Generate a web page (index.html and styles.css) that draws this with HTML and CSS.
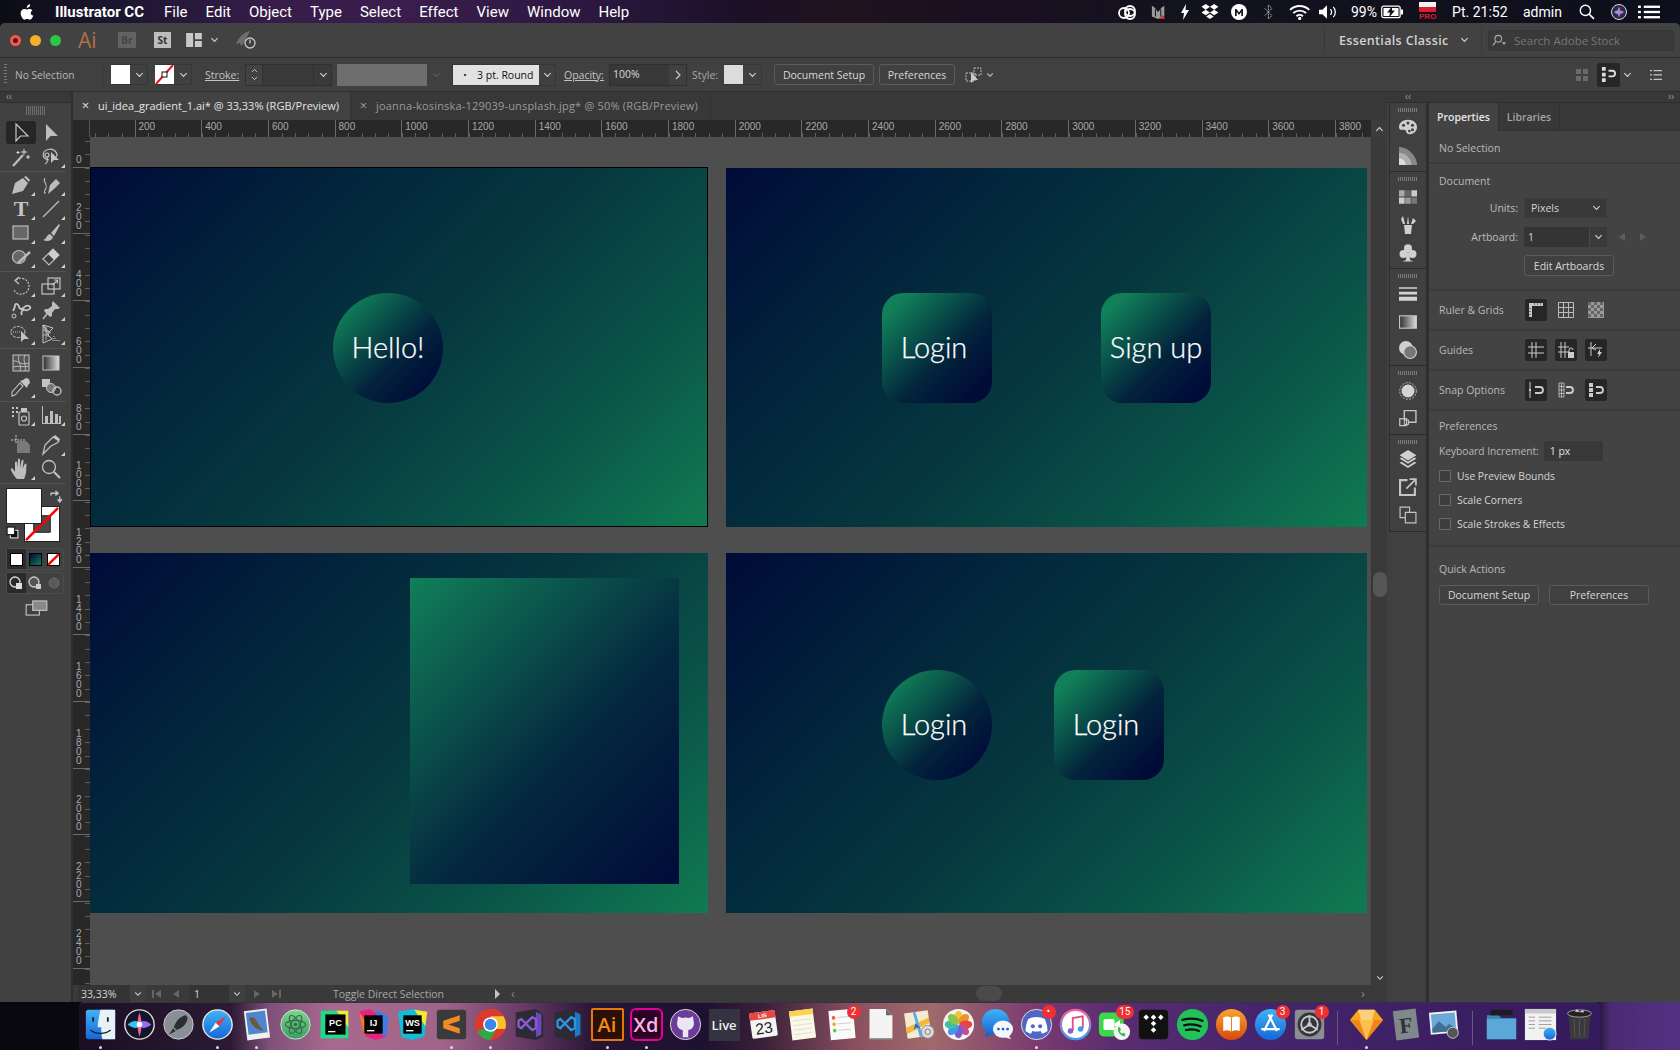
FILE: index.html
```html
<!DOCTYPE html>
<html lang="en">
<head>
<meta charset="utf-8">
<title>Illustrator CC</title>
<link rel="stylesheet" href="styles.css">
</head>
<body>
<svg class="defs" aria-hidden="true">
  <defs>
    <symbol id="chev" viewBox="0 0 10 6"><path d="M1.5 1 5 4.6 8.5 1" fill="none" stroke="currentColor" stroke-width="1.3"/></symbol>
    <linearGradient id="gGrey" x1="0" x2="1" y1="0" y2="0"><stop offset="0" stop-color="#2e2e2e"/><stop offset="1" stop-color="#ddd"/></linearGradient>
    <linearGradient id="gBlue" x1="0" x2="0" y1="0" y2="1"><stop offset="0" stop-color="#3fb4f5"/><stop offset="1" stop-color="#1666d8"/></linearGradient>
    <linearGradient id="gGreen" x1="0" x2="0" y1="0" y2="1"><stop offset="0" stop-color="#7fd28f"/><stop offset="1" stop-color="#3c9e62"/></linearGradient>
    <linearGradient id="gOrange" x1="0" x2="0" y1="0" y2="1"><stop offset="0" stop-color="#f7a52c"/><stop offset="1" stop-color="#d9480f"/></linearGradient>
    <linearGradient id="gFace" x1="0" x2="0" y1="0" y2="1"><stop offset="0" stop-color="#f45fa0"/><stop offset="1" stop-color="#3c9df0"/></linearGradient>
  </defs>
</svg>

<header class="menubar">
  <svg class="apple" viewBox="0 0 16 18"><path d="M11.6 0c.1 1.3-.4 2.3-1.1 3.1-.7.8-1.7 1.3-2.7 1.2-.1-1.2.5-2.3 1.1-3C9.6.6 10.7.1 11.6 0zM15.3 13c-.4 1-.6 1.4-1.1 2.3-.7 1.1-1.7 2.5-3 2.5-1.1 0-1.4-.7-2.9-.7s-1.9.7-3 .7c-1.3 0-2.2-1.3-2.9-2.3C.5 12.6.3 9.3 1.5 7.5c.9-1.3 2.2-2 3.4-2 1.3 0 2.1.7 3.1.7s1.7-.7 3.1-.7c1.1 0 2.3.6 3.1 1.7-2.7 1.5-2.3 5.3.6 5.8z"/></svg>
  <nav class="menus">
    <b>Illustrator CC</b><span>File</span><span>Edit</span><span>Object</span><span>Type</span><span>Select</span><span>Effect</span><span>View</span><span>Window</span><span>Help</span>
  </nav>
  <div class="extras">
    <svg viewBox="0 0 20 16" class="mi"><g fill="none" stroke="#fff" stroke-width="1.8"><circle cx="7" cy="9" r="5"/><circle cx="13" cy="7" r="5"/><circle cx="13" cy="10" r="5"/></g></svg>
    <svg viewBox="0 0 16 18" class="mi"><path d="M1 2l3 2 4 5 4-5 3-2v12l-7 3-7-3z" fill="#9a9a9a"/><path d="M5 6v8M11 6v8" stroke="#1c1c2a" stroke-width="1.2"/><path d="M10 17l3-5 3 5z" fill="#e5252a"/></svg>
    <svg viewBox="0 0 8 16" class="mi"><path d="M5 0 0 9h3l-1 7 6-10H4.6z" fill="#fff"/></svg>
    <svg viewBox="0 0 19 17" class="mi"><path d="M5 0l4.5 3L5 6 .5 3zM14 0l4.5 3L14 6 9.5 3zM5 6l4.5 3L5 12 .5 9zM14 6l4.5 3L14 12 9.5 9zM9.5 10.500l4 2.700-4 2.800-4-2.800z" fill="#fff"/></svg>
    <svg viewBox="0 0 16 16" class="mi"><circle cx="8" cy="8" r="8" fill="#fff"/><path d="M4 12V5h1.5L8 8.500 10.500 5H12v7h-1.700V8L8 11 5.700 8v4z" fill="#15151f"/></svg>
    <svg viewBox="0 0 12 18" class="mi"><path d="M2 5l8 8-4 4V1l4 4-8 8" fill="none" stroke="#bbb" stroke-width="1.1" stroke-dasharray="2 1"/></svg>
    <svg viewBox="0 0 20 15" class="mi"><g fill="none" stroke="#fff" stroke-width="1.8"><path d="M1 5.500a13 13 0 0 1 18 0"/><path d="M4 8.500a9 9 0 0 1 12 0"/><path d="M7 11.500a4.500 4.500 0 0 1 6 0"/></g><circle cx="10" cy="13.500" r="1.500" fill="#fff"/></svg>
    <svg viewBox="0 0 17 14" class="mi"><path d="M0 5h3l4-4v12l-4-4H0z" fill="#fff"/><path d="M10 4.500a3.500 3.500 0 0 1 0 5M12.500 2.500a6.500 6.500 0 0 1 0 9" fill="none" stroke="#fff" stroke-width="1.1"/></svg>
    <span class="mtxt">99%</span>
    <svg viewBox="0 0 22 13" class="mi"><rect x=".7" y=".7" width="18.500" height="11.500" rx="2" fill="none" stroke="#fff" stroke-width="1.2"/><rect x="20" y="4" width="2" height="5" fill="#fff"/><rect x="2.500" y="2.500" width="15" height="8" fill="#fff"/><path d="M11 1 6 7h3l-1 5 6-7h-3z" fill="#15151f"/></svg>
    <div class="flag"><i></i><i></i><em>PRO</em></div>
    <span class="mtxt">Pt. 21:52</span>
    <span class="mtxt">admin</span>
    <svg viewBox="0 0 15 15" class="mi"><circle cx="6" cy="6" r="4.800" fill="none" stroke="#fff" stroke-width="1.3"/><path d="M9.500 9.500 14 14" stroke="#fff" stroke-width="1.5"/></svg>
    <svg viewBox="0 0 16 16" class="mi"><circle cx="8" cy="8" r="7.500" fill="#2a2a48" stroke="#ddd"/><path d="M8 2.500C10 6 10 10 8 13.500 6 10 6 6 8 2.500z" fill="#f45fa0"/><path d="M3 8c3-2 5-2 5 0s-2 3-5 0z" fill="#4ec0f0"/><path d="M13 8c-3-2-5-2-5 0s2 3 5 0z" fill="#a77cf0"/></svg>
    <svg viewBox="0 0 19 13" class="mi"><g fill="#fff"><rect x="0" y="1" width="2.500" height="2"/><rect x="0" y="5.500" width="2.500" height="2"/><rect x="0" y="10" width="2.500" height="2"/><rect x="5" y="1" width="14" height="2"/><rect x="5" y="5.500" width="14" height="2"/><rect x="5" y="10" width="14" height="2"/></g></svg>
  </div>
</header>

<div class="window">
  <div class="appbar">
    <div class="lights"><i class="red"></i><i class="yel"></i><i class="grn"></i></div>
    <span class="ailogo">Ai</span>
    <span class="tile br">Br</span>
    <span class="tile st">St</span>
    <svg viewBox="0 0 18 16" class="wsicon"><path d="M0 0h8v16H0zM10 0h8v7h-8zM10 9h8v7h-8z" fill="#c8c8c8"/></svg>
    <svg class="chev ws-ch"><use href="#chev"/></svg>
    <svg viewBox="0 0 22 18" class="rocket"><path d="M15 0C9 1 4 6 1 13l4-1 1 3c2-2 4-5 9-15z" fill="#6e6e6e"/><circle cx="15" cy="12" r="5" fill="#3f3f3f" stroke="#c8c8c8" stroke-width="1.3"/><path d="M15 8.500v4" stroke="#c8c8c8" stroke-width="1.3"/></svg>
    <div class="spacer"></div>
    <div class="workspace">Essentials Classic <svg class="chev"><use href="#chev"/></svg></div>
    <div class="stock">
      <svg viewBox="0 0 18 14" class="sicon"><circle cx="7" cy="5" r="3.800" fill="none" stroke="#aaa" stroke-width="1.2"/><path d="M4.500 8 1 12.500" stroke="#aaa" stroke-width="1.4"/><path d="M11 9h5l-2.500 3z" fill="#aaa"/></svg>
      <span>Search Adobe Stock</span>
    </div>
  </div>

  <div class="ctrl">
    <i class="grip-v"></i>
    <span class="nosel">No Selection</span>
    <div class="swatchdd"><i class="sw white"></i><svg class="chev"><use href="#chev"/></svg></div>
    <div class="swatchdd"><svg viewBox="0 0 19 19" class="sw"><rect width="19" height="19" fill="#fff"/><path d="M1 19 18 0" stroke="#e3131b" stroke-width="2"/><rect x="7" y="7" width="5" height="5" fill="#fff" stroke="#111"/></svg><svg class="chev"><use href="#chev"/></svg></div>
    <span class="ul stroke-l">Stroke:</span>
    <div class="strokebox"><span class="spin"><svg class="chev up"><use href="#chev"/></svg><svg class="chev"><use href="#chev"/></svg></span><span class="blank"></span><svg class="chev"><use href="#chev"/></svg></div>
    <div class="greybox"><span></span><svg class="chev"><use href="#chev"/></svg></div>
    <div class="brushbox"><span><i>•</i>3 pt. Round</span><svg class="chev"><use href="#chev"/></svg></div>
    <span class="ul opac-l">Opacity:</span>
    <div class="opacbox"><span>100%</span><svg viewBox="0 0 6 10" class="caret"><path d="M1 1l4 4-4 4" fill="none" stroke="#ccc" stroke-width="1.2"/></svg></div>
    <span class="style-l">Style:</span>
    <div class="swatchdd style-d"><i class="sw lgrey"></i><svg class="chev"><use href="#chev"/></svg></div>
    <button class="btn b-doc">Document Setup</button>
    <button class="btn b-pref">Preferences</button>
    <svg viewBox="0 0 17 18" class="isol"><path d="M1 7h9v8H1z M9 2h7v7H9z" fill="none" stroke="#bbb" stroke-dasharray="2 1"/><path d="M6 6v11l3-3h4z" fill="#ccc"/></svg>
    <svg class="chev iso-ch"><use href="#chev"/></svg>
    <div class="spacer"></div>
    <svg viewBox="0 0 12 12" class="grid4"><path d="M0 0h5v5H0zM7 0h5v5H7zM0 7h5v5H0zM7 7h5v5H7z" fill="#6a6a6a"/></svg>
    <div class="darkbox"><svg viewBox="0 0 16 18"><path d="M1 1h4v4H1zM1 7h4v4H1zM1 13h4v4H1z" fill="#ddd"/><path d="M8 5h4a3 3 0 0 1 0 6H8" fill="none" stroke="#ddd" stroke-width="2"/></svg></div>
    <svg class="chev"><use href="#chev"/></svg>
    <svg viewBox="0 0 12 12" class="listic"><path d="M0 1h2v1.300H0zM0 5.300h2v1.300H0zM0 9.700h2V11H0zM3.500 1H12v1.300H3.500zM3.500 5.300H12v1.300H3.500zM3.500 9.700H12V11H3.500z" fill="#c4c4c4"/></svg>
  </div>

  <div class="work">
    <aside class="toolbar">
      <div class="collapse"><span>‹‹</span></div>
      <div class="grip"></div>
      <div class="tools t-first">
        <span class="tool on"><svg viewBox="0 0 22 22" class="ic"><path d="M6 2v17l4.500-5H18z"/></svg></span>
        <span class="tool"><svg viewBox="0 0 22 22" class="fi"><path d="M6 2v17l4.500-5H18z"/></svg></span>
        <span class="tool"><svg viewBox="0 0 22 22"><path d="M3 20 13 9" stroke="#bdbdbd" stroke-width="2.2"/><path d="M14 3v6M11 6h6M18 9v4M16 11h4M8 5v3M6.500 6.500h3" stroke="#ddd"/></svg></span>
        <span class="tool more"><svg viewBox="0 0 22 22" class="ic"><path d="M9 14C3 13 2 9 4 6s8-4 11-1 2 5 1 6"/><circle cx="7" cy="9" r="2"/><path d="M7 11c1 4 0 6-2 7"/><path d="M11 6v11l3-3h5z" class="fi2"/></svg></span>
      </div>
      <div class="tools t-tight">
        <span class="tool more"><svg viewBox="0 0 22 22" class="fi"><path d="M2 20 5 9 13 4l5 5-5 8zM2 20l6-6" /><path d="M14 3l2-1 4 4-1 2z"/></svg></span>
        <span class="tool more"><svg viewBox="0 0 22 22"><path d="M8 20 10 11l6-6 4 4-6 6z" fill="#bdbdbd"/><path d="M5 4C2 8 8 9 6 14s-3 5 0 5" fill="none" stroke="#bdbdbd" stroke-width="1.1"/></svg></span>
        <span class="tool more"><b class="ttool">T</b></span>
        <span class="tool more"><svg viewBox="0 0 22 22"><path d="M3 19 19 3" stroke="#bdbdbd" stroke-width="1.2"/></svg></span>
        <span class="tool more"><svg viewBox="0 0 22 22"><rect x="3" y="4" width="15" height="13" fill="#666" stroke="#bdbdbd" stroke-width="1.2"/></svg></span>
        <span class="tool more"><svg viewBox="0 0 22 22" class="fi"><path d="M19 2 11 11l3 3 6-11zM10 12c-4 1-3 5-7 6 4 2 9 1 10-3z"/></svg></span>
        <span class="tool more"><svg viewBox="0 0 22 22"><circle cx="9" cy="11" r="6.500" fill="#666" stroke="#bdbdbd" stroke-width="1.2"/><path d="M8 17 20 6" stroke="#bdbdbd" stroke-width="2.4"/></svg></span>
        <span class="tool more"><svg viewBox="0 0 22 22"><path d="M3 13 13 3l6 6-10 10z" fill="#3f3f3f" stroke="#bdbdbd" stroke-width="1.2"/><path d="M8 8 13 3l6 6-5 5z" fill="#cfcfcf"/></svg></span>
      </div>
      <div class="tools">
        <span class="tool more"><svg viewBox="0 0 22 22" class="ic"><path d="M6 5A8 8 0 1 1 4 15" stroke-dasharray="2 1.3"/><path d="M9 2 5 5.500 9 9"/></svg></span>
        <span class="tool more"><svg viewBox="0 0 22 22" class="ic"><rect x="8" y="3" width="12" height="11"/><rect x="2" y="9" width="12" height="10"/><path d="M12 10l5-4M14 5h3.500v3.500"/></svg></span>
        <span class="tool more"><svg viewBox="0 0 22 22"><path d="M3 12c3-4 1-8 4-7s1 5 4 5 4-5 8-3-2 5-4 4-5 2-3 5" fill="none" stroke="#c8c8c8" stroke-width="1.8"/><circle cx="4" cy="17" r="2" fill="none" stroke="#c8c8c8"/></svg></span>
        <span class="tool more"><svg viewBox="0 0 22 22" class="fi"><path d="M13 2 20 9l-2 1-3 0-3 4 0 3-2 1L4 12l1-2 3 0 4-3 0-3z"/><path d="M3 20 8 13.500" stroke="#bdbdbd" stroke-width="1.5"/></svg></span>
        <span class="tool more"><svg viewBox="0 0 22 22"><ellipse cx="8" cy="9" rx="7" ry="5.500" fill="none" stroke="#c4c4c4" stroke-dasharray="3 1"/><path d="M3 9h9" stroke="#c4c4c4" stroke-dasharray="1 1"/><path d="M11 8v11l3-3h5z" fill="#c4c4c4"/></svg></span>
        <span class="tool more"><svg viewBox="0 0 22 22"><path d="M3 2v18l9-4-4-4z M3 2l6 7 4-4z" fill="none" stroke="#c4c4c4"/><path d="M3 7l8 3M3 12h5M6 4v13M9 9l-1 5" stroke="#c4c4c4" stroke-width=".8"/><path d="M12 15h4v1h-4zM13 13h2v1h-2zM12 17h8v1h-8z" fill="#888"/></svg></span>
      </div>
      <div class="tools">
        <span class="tool"><svg viewBox="0 0 22 22"><rect x="3" y="3" width="16" height="16" fill="#555" stroke="#c4c4c4"/><path d="M3 9c6-1 6 5 16 2M9 3c-2 8 3 8 1 16M15 3c-3 6 2 10 0 16M3 15c6-2 10 1 16-1" fill="none" stroke="#c4c4c4" stroke-width=".9"/></svg></span>
        <span class="tool"><svg viewBox="0 0 22 22"><rect x="3" y="4" width="16" height="14" fill="url(#gGrey)" stroke="#c4c4c4"/></svg></span>
        <span class="tool more"><svg viewBox="0 0 22 22"><path d="M2 20l3-1 8-9-3-3-8 9z" fill="none" stroke="#c4c4c4" stroke-width="1.1"/><path d="M10 5l7 7 1-3 2-2-1-4-3-1-3 2z" fill="#c4c4c4"/></svg></span>
        <span class="tool"><svg viewBox="0 0 22 22"><rect x="2" y="3" width="8" height="8" fill="#c4c4c4"/><circle cx="11" cy="12" r="4.500" fill="#777" stroke="#c4c4c4"/><circle cx="17" cy="15" r="4" fill="none" stroke="#c4c4c4" stroke-width="1.3"/></svg></span>
      </div>
      <div class="tools nosep">
        <span class="tool more"><svg viewBox="0 0 22 22"><path d="M2 3h2v2H2zM6 3h2v2H6zM2 7h2v2H2zM6 7h2v2H6zM2 11h2v2H2z" fill="#c4c4c4"/><rect x="9" y="8" width="10" height="13" rx="1" fill="#3f3f3f" stroke="#c4c4c4" stroke-width="1.2"/><rect x="11" y="4" width="6" height="4" fill="#c4c4c4"/><circle cx="14" cy="14.500" r="2.500" fill="none" stroke="#c4c4c4" stroke-width="1.2"/></svg></span>
        <span class="tool more"><svg viewBox="0 0 22 22" class="fi"><path d="M2 2h1v17h18v1H2zM5 12h3v7H5zM10 7h3v12h-3zM15 10h3v9h-3zM19 12h2v7h-2z"/></svg></span>
      </div>
      <div class="tools t-last">
        <span class="tool"><svg viewBox="0 0 22 22"><path d="M6 1v9M1 6h14" stroke="#c4c4c4" stroke-dasharray="2 1"/><path d="M7 7h9l4 4v8H7z" fill="#7a7a7a"/></svg></span>
        <span class="tool more"><svg viewBox="0 0 22 22"><path d="M3 20l2-9 8-8 6 4-2 2-6 3z" fill="none" stroke="#c4c4c4" stroke-width="1.2"/><path d="M13 3l6 4 1-2-5-4z" fill="#c4c4c4"/></svg></span>
        <span class="tool more"><svg viewBox="0 0 22 22" class="fi"><path d="M7 21c-2-2-5-6-6-9-.5-2 1-2 2-1l2 3 0-9c0-2 2-2 2 0v5l1-8c0-2 2-2 2 0v8l1.500-7c.5-2 2.500-1.500 2 .5l-1 7 2-4c1-2 2.500-1 2 .5L16 15c-1 3-1 4-2 6z"/></svg></span>
        <span class="tool"><svg viewBox="0 0 22 22"><circle cx="9" cy="9" r="6.500" fill="none" stroke="#c4c4c4" stroke-width="1.3"/><path d="M14 14l6 6" stroke="#c4c4c4" stroke-width="2"/></svg></span>
      </div>
      <div class="colors">
        <div class="fillstroke">
          <i class="bigfill"></i>
          <svg viewBox="0 0 35 35" class="bigstroke"><path d="M0 0h35v35H0z M9 9v17h17V9z" fill="#fff" fill-rule="evenodd"/><path d="M9 9h17v17H9z" fill="#4a4a4a" stroke="#222"/><path d="M1 34 34 1" stroke="#f00" stroke-width="2.6"/></svg>
          <svg viewBox="0 0 12 12" class="swap"><path d="M1 5V3h6M5 1l2.500 2L5 5M9 6v4M7 8.500l2 2.500 2-2.500" fill="none" stroke="#c4c4c4" stroke-width="1.3"/></svg>
          <svg viewBox="0 0 12 12" class="deflt"><rect x="4" y="4" width="7" height="7" fill="#111" stroke="#ddd"/><rect x="1" y="1" width="7" height="7" fill="#fff" stroke="#111"/></svg>
        </div>
        <div class="seg">
          <span class="on"><i class="cm white"></i></span>
          <span><i class="cm grad"></i></span>
          <span><svg viewBox="0 0 12 12" class="cm"><rect width="12" height="12" fill="#fff"/><path d="M0 12 12 0" stroke="#f00" stroke-width="2.6"/></svg></span>
        </div>
        <div class="seg">
          <span class="on"><svg viewBox="0 0 14 14" class="dm"><circle cx="6" cy="6" r="5" fill="none" stroke="#ddd" stroke-width="1.3"/><rect x="7" y="7" width="6" height="6" fill="#ddd"/></svg></span>
          <span><svg viewBox="0 0 14 14" class="dm"><circle cx="6" cy="6" r="5" fill="#555" stroke="#ccc" stroke-width="1.3"/><rect x="8" y="8" width="5" height="5" fill="#ccc"/></svg></span>
          <span><svg viewBox="0 0 14 14" class="dm"><circle cx="7" cy="7" r="5" fill="#5a5a5a" stroke="#6a6a6a"/></svg></span>
        </div>
        <svg viewBox="0 0 24 17" class="screen"><rect x="1" y="5" width="14" height="11" fill="#3f3f3f" stroke="#c4c4c4" stroke-width="1.2"/><rect x="8" y="1" width="15" height="10" fill="#888" stroke="#c4c4c4" stroke-width="1.2"/></svg>
      </div>
    </aside>

    <main class="doc">
      <div class="tabs">
        <div class="tab active"><span class="x">×</span>ui_idea_gradient_1.ai* @ 33,33% (RGB/Preview)</div>
        <div class="tab"><span class="x">×</span>joanna-kosinska-129039-unsplash.jpg* @ 50% (RGB/Preview)</div>
      </div>
      <div class="hruler">
        <i class="corner"></i>
        <div class="hticks">
          <span class="lead"></span>
          <span>200</span><span>400</span><span>600</span><span>800</span><span>1000</span><span>1200</span><span>1400</span><span>1600</span><span>1800</span><span>2000</span><span>2200</span><span>2400</span><span>2600</span><span>2800</span><span>3000</span><span>3200</span><span>3400</span><span>3600</span><span>3800</span>
        </div>
        <i class="vs-up"><svg class="chev flip"><use href="#chev"/></svg></i>
      </div>
      <div class="mid">
        <div class="vruler">
          <span class="first">0</span>
          <span>200</span><span>400</span><span>600</span><span>800</span><span>1000</span><span>1200</span><span>1400</span><span>1600</span><span>1800</span><span>2000</span><span>2200</span><span>2400</span>
        </div>
        <div class="canvas">
          <section class="ab ab1 selected">
            <div class="pill circle c1">Hello!</div>
          </section>
          <section class="ab ab2">
            <div class="pill round r1"><span class="nudge">Login</span></div>
            <div class="pill round r2">Sign up</div>
          </section>
          <section class="ab ab3">
            <div class="bigsq"></div>
          </section>
          <section class="ab ab4">
            <div class="pill circle c4"><span class="nudge">Login</span></div>
            <div class="pill round r4"><span class="nudge">Login</span></div>
          </section>
        </div>
        <div class="vscroll"><i class="vthumb"></i><svg class="chev vs-down"><use href="#chev"/></svg></div>
      </div>
      <div class="statusbar">
        <div class="fld zoomf"><span>33,33%</span></div><span class="ddbox"><svg class="chev"><use href="#chev"/></svg></span>
        <div class="navs"><i class="first-i"></i><i class="prev-i"></i></div>
        <div class="fld pagef"><span>1</span></div><span class="ddbox"><svg class="chev"><use href="#chev"/></svg></span>
        <div class="navs"><i class="next-i"></i><i class="last-i"></i></div>
        <span class="toggle">Toggle Direct Selection</span>
        <i class="playbox"></i>
        <span class="lt">‹</span>
        <div class="htrack"><i class="hthumb"></i></div>
        <span class="rt">›</span>
      </div>
    </main>

    <div class="iconcol">
      <div class="collapse col-top"><span>‹‹</span></div>
      <div class="dockgroup g1">
        <i class="gripdots"></i>
        <svg viewBox="0 0 20 16" class="pi"><path d="M10 0C4 0 0 4 0 8c0 4 3 3 5 3 2 0 3 1 3 2s1 3 4 3c5 0 8-4 8-8s-4-8-10-8z" fill="#cfcfcf"/><g fill="#3f3f3f"><circle cx="10" cy="3.500" r="1.700"/><circle cx="15" cy="6" r="1.700"/><circle cx="5" cy="6" r="1.700"/><circle cx="15" cy="11" r="1.700"/><circle cx="11.500" cy="12.500" r="1.500"/></g></svg>
        <svg viewBox="0 0 16 16" class="pi"><path d="M0 0c8 0 16 8 16 16H0z" fill="#888"/><path d="M0 5c6 0 11 5 11 11H0z" fill="#b0b0b0"/><path d="M0 10c3 0 6 3 6 6H0z" fill="#ddd"/></svg>
      </div>
      <div class="dockgroup g2">
        <i class="gripdots"></i>
        <svg viewBox="0 0 16 12" class="pi"><path d="M0 0h5v5.500H0z" fill="#aaa"/><path d="M5.500 0h5v5.500h-5z" fill="#666"/><path d="M11 0h5v5.500h-5zM0 6.500h5V12H0z" fill="#ccc"/><path d="M5.500 6.500h5V12h-5z" fill="#999"/><path d="M11 6.500h5V12h-5z" fill="#777"/></svg>
        <svg viewBox="0 0 16 18" class="pi"><path d="M4 9h8l-1 9H5z" fill="#cfcfcf"/><path d="M3 0l2 8H3L1 3zM8 0l1 8H7zM13 2l-2 6h2l3-3z" fill="#cfcfcf"/></svg>
        <svg viewBox="0 0 16 17" class="pi"><g fill="#cfcfcf"><circle cx="8" cy="4" r="3.800"/><circle cx="3.800" cy="9.500" r="3.800"/><circle cx="12.200" cy="9.500" r="3.800"/><path d="M7 8h2l1 7 3 1.500H3L6 15z"/></g></svg>
      </div>
      <div class="dockgroup g3">
        <i class="gripdots"></i>
        <svg viewBox="0 0 16 12" class="pi"><path d="M0 0h16v1.300H0zM0 4h16v2.500H0zM0 8.500h16V12H0z" fill="#d4d4d4"/></svg>
        <svg viewBox="0 0 16 12" class="pi"><rect x=".5" y=".5" width="15" height="11" fill="url(#gGrey)" stroke="#c4c4c4"/></svg>
        <svg viewBox="0 0 17 17" class="pi"><circle cx="6.500" cy="6.500" r="6.500" fill="#d0d0d0"/><circle cx="10.500" cy="10.500" r="6" fill="#777" stroke="#d0d0d0"/></svg>
      </div>
      <div class="dockgroup g4">
        <i class="gripdots"></i>
        <svg viewBox="0 0 18 18" class="pi"><circle cx="9" cy="9" r="6.500" fill="#d4d4d4"/><circle cx="9" cy="9" r="8.300" fill="none" stroke="#bbb" stroke-dasharray="2 1.3"/></svg>
        <svg viewBox="0 0 17 16" class="pi"><path d="M5 10V1h11v11H9" fill="none" stroke="#c4c4c4" stroke-width="1.3"/><rect x=".7" y="8.700" width="6.500" height="6.500" fill="none" stroke="#c4c4c4" stroke-width="1.2"/><rect x="5" y="10" width="4" height="4" fill="none" stroke="#c4c4c4"/></svg>
      </div>
      <div class="dockgroup g5">
        <i class="gripdots"></i>
        <svg viewBox="0 0 16 17" class="pi"><path d="M8 0l8 5-8 5-8-5z" fill="#d0d0d0"/><path d="M0 8l2-1 6 4 6-4 2 1-8 5z" fill="#d0d0d0"/><path d="M0 12l2-1 6 4 6-4 2 1-8 5z" fill="#d0d0d0"/></svg>
        <svg viewBox="0 0 17 17" class="pi"><path d="M8 2H1v14h14V9" fill="none" stroke="#c4c4c4" stroke-width="2"/><path d="M7 10l8-8M10 1h6v6" fill="none" stroke="#c4c4c4" stroke-width="1.6"/></svg>
        <svg viewBox="0 0 17 17" class="pi"><path d="M1 1h9v5H6v5H1zM6 6h10v10H6z" fill="none" stroke="#c4c4c4" stroke-width="1.1"/></svg>
      </div>
    </div>

    <aside class="panel">
      <div class="collapse right"><span>››</span></div>
      <div class="ptabs"><div class="ptab active">Properties</div><div class="ptab">Libraries</div></div>
      <section class="sec s-nosel"><span class="plabel">No Selection</span></section>
      <section class="sec s-doc">
        <div class="plabel title">Document</div>
        <div class="frow"><label>Units:</label><div class="fld unitsf"><span>Pixels</span><svg class="chev"><use href="#chev"/></svg></div></div>
        <div class="frow"><label>Artboard:</label><div class="fld abf"><span>1</span><span class="abdd"><svg class="chev"><use href="#chev"/></svg></span></div><i class="tri-l"></i><i class="tri-r"></i></div>
        <div class="frow"><label></label><button class="btn editab">Edit Artboards</button></div>
      </section>
      <section class="sec s-row"><span class="rowlabel">Ruler &amp; Grids</span>
        <div class="sq on"><svg viewBox="0 0 16 16"><path d="M1 1h14v3H4v11H1z" fill="#c8c8c8"/><path d="M6 2h1M9 2h1M12 2h1M2 6v1M2 9v1M2 12v1" stroke="#222"/></svg></div>
        <div class="sq"><svg viewBox="0 0 16 16"><path d="M.5.5h15v15H.5zM5.500.5v15M10.500.5v15M.5 5.500h15M.5 10.500h15" fill="none" stroke="#bbb"/></svg></div>
        <div class="sq"><svg viewBox="0 0 16 16"><rect width="16" height="16" fill="#9a9a9a"/><path d="M0 0h3v3H0zM6 0h3v3H6zM12 0h3v3h-3zM3 3h3v3H3zM9 3h3v3H9zM0 6h3v3H0zM6 6h3v3H6zM12 6h3v3h-3zM3 9h3v3H3zM9 9h3v3H9zM0 12h3v3H0zM6 12h3v3H6zM12 12h3v3h-3z" fill="#666"/></svg></div>
      </section>
      <section class="sec s-row"><span class="rowlabel">Guides</span>
        <div class="sq on"><svg viewBox="0 0 16 16"><path d="M4 0v16M8 0v16M0 5h16M0 11h16" stroke="#ccc" fill="none"/></svg></div>
        <div class="sq on"><svg viewBox="0 0 16 16"><path d="M3 0v16M7 0v16M0 5h11M0 10h11" stroke="#ccc" fill="none"/><rect x="10" y="10" width="6" height="6" fill="#ccc"/><path d="M11 10V8a2 2 0 0 1 4 0" stroke="#ccc" fill="none"/></svg></div>
        <div class="sq on"><svg viewBox="0 0 16 16"><path d="M3 0v14M0 6h14M8 2 4 6l4 2" stroke="#ccc" fill="none"/><path d="M12 7l-3 5h2l-1 4 4-6h-2z" fill="#ccc"/></svg></div>
      </section>
      <section class="sec s-row"><span class="rowlabel">Snap Options</span>
        <div class="sq on"><svg viewBox="0 0 16 16"><path d="M2 0v16" stroke="#ccc"/><rect x="1" y="7" width="2" height="2" fill="#ccc"/><path d="M7 5h5a3 3 0 0 1 0 6H7" fill="none" stroke="#ccc" stroke-width="1.8"/></svg></div>
        <div class="sq"><svg viewBox="0 0 16 16"><path d="M1 1h5v14H1zM1 4.500h5M1 8h5M1 11.500h5M3.500 1v14" fill="none" stroke="#bbb" stroke-width=".9"/><path d="M8 5h4a3 3 0 0 1 0 6H8" fill="none" stroke="#ccc" stroke-width="1.8"/></svg></div>
        <div class="sq on"><svg viewBox="0 0 16 16"><path d="M1 1h4v4H1zM1 6h4v4H1zM1 11h4v4H1z" fill="#ccc"/><path d="M8 5h4a3 3 0 0 1 0 6H8" fill="none" stroke="#ccc" stroke-width="1.8"/></svg></div>
      </section>
      <section class="sec s-pref">
        <div class="plabel title">Preferences</div>
        <div class="krow"><label>Keyboard Increment:</label><div class="fld kf"><span>1 px</span></div></div>
        <div class="chk"><i></i>Use Preview Bounds</div>
        <div class="chk"><i></i>Scale Corners</div>
        <div class="chk"><i></i>Scale Strokes &amp; Effects</div>
      </section>
      <section class="sec s-quick">
        <div class="plabel title">Quick Actions</div>
        <div class="qrow"><button class="btn qb">Document Setup</button><button class="btn qb">Preferences</button></div>
      </section>
    </aside>
  </div>
</div>

<footer class="dockrow">
  <div class="dock">
    <div class="app on"><svg viewBox="0 0 36 36"><rect x="2" y="2" width="32" height="32" rx="3" fill="url(#gBlue)"/><path d="M18 2h16v32H20c-1-4-1.500-9-1-13h-4c0-7 2-14 3-19z" fill="#e8f0f8"/><path d="M10 10v5M26 10v5" stroke="#123" stroke-width="2"/><path d="M7 24c6 5 16 5 22 0" fill="none" stroke="#123" stroke-width="1.5"/></svg></div>
    <div class="app"><svg viewBox="0 0 36 36"><circle cx="18" cy="18" r="16" fill="#15152a" stroke="#ddd" stroke-width="1.5"/><path d="M18 5c3 8 3 18 0 26-3-8-3-18 0-26z" fill="#f45fa0"/><path d="M5 18c6-5 13-5 13 0s-7 5-13 0z" fill="#39c2f0"/><path d="M31 18c-6-5-13-5-13 0s7 5 13 0z" fill="#9a6cf2"/><circle cx="18" cy="18" r="3" fill="#fff"/></svg></div>
    <div class="app"><svg viewBox="0 0 36 36"><circle cx="18" cy="18" r="16" fill="#8a8f96" stroke="#cfd2d6"/><path d="M26 8c-6 1-11 6-13 13l3 3c7-2 11-7 12-13z" fill="#2b2e33"/><path d="M12 22l-4 7 7-4z" fill="#2b2e33"/></svg></div>
    <div class="app on"><svg viewBox="0 0 36 36"><circle cx="18" cy="18" r="16" fill="url(#gBlue)" stroke="#e8e8e8" stroke-width="1.5"/><path d="M27 9 20 20l-4-4z" fill="#e33"/><path d="M9 27l7-11 4 4z" fill="#fff"/></svg></div>
    <div class="app on"><svg viewBox="0 0 36 36"><g transform="rotate(-7 18 18)"><rect x="6" y="2" width="25" height="32" fill="#f0f0f0"/><rect x="8" y="4" width="21" height="24" fill="#4f86cf"/><path d="M11 10c5-2 8 3 9 8l5 8-7-3c-3-3-7-8-7-13z" fill="#6d5a38"/></g></svg></div>
    <div class="app"><svg viewBox="0 0 36 36"><circle cx="18" cy="18" r="16" fill="url(#gGreen)" stroke="#cdeccf"/><g fill="none" stroke="#2f6f44" stroke-width="1.3"><ellipse cx="18" cy="18" rx="11" ry="4.500"/><ellipse cx="18" cy="18" rx="11" ry="4.500" transform="rotate(60 18 18)"/><ellipse cx="18" cy="18" rx="11" ry="4.500" transform="rotate(120 18 18)"/></g><circle cx="18" cy="18" r="2" fill="#2f6f44"/></svg></div>
    <div class="app"><svg viewBox="0 0 36 36"><path d="M3 3h30v30H3z" fill="#1edc87"/><path d="M20 3h13v18z" fill="#f7e53c"/><path d="M3 16l12 17H3z" fill="#21d789"/><rect x="8" y="7" width="22" height="22" fill="#000"/><text x="19" y="20" class="jb">PC</text><path d="M11 25h8v1.500h-8z" fill="#fff"/></svg></div>
    <div class="app"><svg viewBox="0 0 36 36"><path d="M2 4 14 1l8 6 12 2-2 22-12 4L8 30z" fill="#e8227c"/><path d="M20 2l14 7-2 22-8-3z" fill="#3a7df0"/><path d="M2 4l6 26 8-6z" fill="#f57b21"/><rect x="8" y="8" width="20" height="20" fill="#000"/><text x="18" y="20" class="jb">IJ</text><path d="M11 24h8v1.500h-8z" fill="#fff"/></svg></div>
    <div class="app"><svg viewBox="0 0 36 36"><path d="M2 4l16-3 16 3-3 27-13 4L6 32z" fill="#13bdd8"/><path d="M20 2l14 2-2 16z" fill="#f6e732"/><rect x="8" y="8" width="20" height="20" fill="#000"/><text x="18" y="20" class="jb">WS</text><path d="M11 24h8v1.500h-8z" fill="#fff"/></svg></div>
    <div class="app on"><svg viewBox="0 0 36 36"><rect x="2" y="2" width="32" height="32" rx="3" fill="#3a3a3d"/><path d="M27 8v6L9 20v-6zM9 16l18 6v6L9 22z" fill="#f08a21"/></svg></div>
    <div class="app on"><svg viewBox="0 0 36 36"><circle cx="18" cy="18" r="17" fill="#db3a2c"/><path d="M18 18 3.500 26A17 17 0 0 0 18 35l8-15z" fill="#2da84a"/><path d="M18 1a17 17 0 0 1 16 22H18z" fill="#f7c428"/><path d="M18 1A17 17 0 0 0 3 10l8 13 7-5V9h15A17 17 0 0 0 18 1z" fill="#db3a2c"/><circle cx="18" cy="18" r="8" fill="#fff"/><circle cx="18" cy="18" r="6.300" fill="#3d85ee"/></svg></div>
    <div class="app"><svg viewBox="0 0 36 36"><path d="M3 5l22-4 8 6v24l-8 4-22-4z" fill="#2c2b33"/><path d="M25 4l6 3v22l-6 3z" fill="#6e47b8"/><path d="M9 12l12 12 4-2V12l-4-2L9 22l-3-2v-6z" fill="none" stroke="#8a5cd8" stroke-width="2.5"/></svg></div>
    <div class="app"><svg viewBox="0 0 36 36"><path d="M3 5l22-4 8 6v24l-8 4-22-4z" fill="#2c2b33"/><path d="M25 4l6 3v22l-6 3z" fill="#1b79cc"/><path d="M9 12l12 12 4-2V12l-4-2L9 22l-3-2v-6z" fill="none" stroke="#2d95e8" stroke-width="2.5"/></svg></div>
    <div class="app on"><div class="adobe ai">Ai</div></div>
    <div class="app on"><div class="adobe xd">Xd</div></div>
    <div class="app"><svg viewBox="0 0 36 36"><circle cx="18" cy="18" r="16.500" fill="#6a3d9a" stroke="#e8e8e8"/><path d="M10 9l4 2c3-1 5-1 8 0l4-2 1 6c1 5-2 9-6 9v8h-6v-8c-4 0-7-4-6-9z" fill="#ece6f4"/></svg></div>
    <div class="app"><div class="live">Live</div></div>
    <div class="app"><svg viewBox="0 0 36 36"><g transform="rotate(-8 18 18)"><rect x="4" y="4" width="28" height="28" rx="2" fill="#f4f4f4"/><path d="M4 4h28v8H4z" fill="#e8473f"/><text x="18" y="10.500" class="calm">LIS</text><text x="18" y="28" class="cald">23</text></g></svg></div>
    <div class="app"><svg viewBox="0 0 36 36"><g transform="rotate(-7 18 18)"><rect x="5" y="2" width="26" height="32" fill="#fbf9e6"/><path d="M5 2h26v6H5z" fill="#f8d551"/><path d="M8 13h20M8 18h20M8 23h20M8 28h20" stroke="#ddd"/></g></svg></div>
    <div class="app badge-host"><svg viewBox="0 0 36 36"><g transform="rotate(-5 18 18)"><rect x="5" y="2" width="27" height="32" fill="#fafafa"/><circle cx="10" cy="10" r="2" fill="#f5553f"/><circle cx="10" cy="17" r="2" fill="#f5a623"/><circle cx="10" cy="24" r="2" fill="#5ac85a"/><path d="M14 10h14M14 17h14M14 24h14" stroke="#ccc"/></g></svg><b class="badge">2</b></div>
    <div class="app"><svg viewBox="0 0 36 36"><path d="M6 1h18l7 7v26H6z" fill="#f4f4f4"/><path d="M24 1v7h7z" fill="#6b6b6b"/><path d="M6 33h25v1.500H6z" fill="#777"/></svg></div>
    <div class="app"><svg viewBox="0 0 36 36"><g transform="rotate(-8 16 18)"><rect x="3" y="4" width="26" height="28" fill="#f3ecd2"/><path d="M3 20l26-8v6L3 27z" fill="#f1b83a"/><path d="M14 4l4 28" stroke="#5aa9e8" stroke-width="3"/><path d="M14 16l-3 7 4-2 4 2z" fill="#1b6fd0"/></g><circle cx="27" cy="26" r="7" fill="#ddd" stroke="#888"/><circle cx="27" cy="26" r="3" fill="none" stroke="#777"/></svg></div>
    <div class="app"><svg viewBox="0 0 36 36"><circle cx="18" cy="18" r="17" fill="#f4f4f4"/><g transform="translate(18 18)"><ellipse cy="-8" rx="4.500" ry="7" fill="#f5c33b"/><ellipse cy="-8" rx="4.500" ry="7" fill="#f0932b" transform="rotate(45)"/><ellipse cy="-8" rx="4.500" ry="7" fill="#e8453c" transform="rotate(90)"/><ellipse cy="-8" rx="4.500" ry="7" fill="#c74b9b" transform="rotate(135)"/><ellipse cy="-8" rx="4.500" ry="7" fill="#7a5cc7" transform="rotate(180)"/><ellipse cy="-8" rx="4.500" ry="7" fill="#3d9be9" transform="rotate(225)"/><ellipse cy="-8" rx="4.500" ry="7" fill="#3fbfa2" transform="rotate(270)"/><ellipse cy="-8" rx="4.500" ry="7" fill="#8ac44a" transform="rotate(315)"/></g></svg></div>
    <div class="app"><svg viewBox="0 0 36 36"><ellipse cx="16" cy="15" rx="15" ry="14" fill="url(#gBlue)"/><path d="M6 26l-2 6 8-3z" fill="#1666d8"/><ellipse cx="24" cy="23" rx="11" ry="9.500" fill="#f4f6fa"/><path d="M30 30l3 4-7-2z" fill="#f4f6fa"/><circle cx="19" cy="23" r="1.500" fill="#0e62d0"/><circle cx="24" cy="23" r="1.500" fill="#0e62d0"/><circle cx="29" cy="23" r="1.500" fill="#0e62d0"/></svg></div>
    <div class="app on badge-host"><svg viewBox="0 0 36 36"><circle cx="18" cy="18" r="16.500" fill="#5066c4" stroke="#e8e8e8"/><path d="M9 12c5-3 13-3 18 0 2 4 3 9 3 13-2 1.500-4 2.500-6 3l-1.500-3c-3 1-6 1-9 0L12 28c-2-.5-4-1.500-6-3 0-4 1-9 3-13z" fill="#fff"/><circle cx="14" cy="20" r="2.200" fill="#5066c4"/><circle cx="22" cy="20" r="2.200" fill="#5066c4"/></svg><b class="badge">•</b></div>
    <div class="app"><svg viewBox="0 0 36 36"><circle cx="18" cy="18" r="16" fill="#fff" stroke="url(#gFace)" stroke-width="2.5"/><path d="M15 25V11l11-2v13" fill="none" stroke="#e84a8a" stroke-width="2"/><circle cx="12.500" cy="25" r="3" fill="#8a5cd8"/><circle cx="23.500" cy="23" r="3" fill="#3d9be9"/></svg></div>
    <div class="app badge-host"><svg viewBox="0 0 36 36"><rect x="1" y="5" width="27" height="26" rx="5" fill="#3bd84c"/><rect x="6" y="12" width="12" height="12" rx="2" fill="#fff"/><path d="M18 17l6-4v10l-6-4z" fill="#fff"/><circle cx="26" cy="26" r="9" fill="#f4f4f4"/><path d="M22 21c-1 5 2 9 7 10l1-3-3-1-1 1c-1-1-2-2-2-3l1-1-1-3z" fill="#3bb84c"/></svg><b class="badge">15</b></div>
    <div class="app"><svg viewBox="0 0 36 36"><rect x="2" y="2" width="32" height="32" rx="4" fill="#111"/><path d="M18 7l3 3-3 3-3-3zM10 7l3 3-3 3-3-3zM26 7l3 3-3 3-3-3zM18 14l3 3-3 3-3-3zM18 21l3 3-3 3-3-3z" fill="#fff"/></svg></div>
    <div class="app"><svg viewBox="0 0 36 36"><circle cx="18" cy="18" r="17" fill="#1fc35a"/><path d="M7 13c7-2 15-2 22 1M9 19c6-2 13-1 18 1M11 24c5-1 10-1 14 1" fill="none" stroke="#111" stroke-width="2.5" stroke-linecap="round"/></svg></div>
    <div class="app"><svg viewBox="0 0 36 36"><circle cx="18" cy="18" r="17" fill="url(#gOrange)"/><path d="M18 11c-3-2-6-2-9-1v15c3-1 6-1 9 1 3-2 6-2 9-1V10c-3-1-6-1-9 1z" fill="#fff"/><path d="M18 11v15" stroke="#e8701a"/></svg></div>
    <div class="app badge-host"><svg viewBox="0 0 36 36"><circle cx="18" cy="18" r="17" fill="url(#gBlue)"/><path d="M20 7 11 25M16 7l9 18M8 23h20" stroke="#fff" stroke-width="2.4" fill="none"/></svg><b class="badge">3</b></div>
    <div class="app badge-host"><svg viewBox="0 0 36 36"><rect x="2" y="2" width="32" height="32" rx="3" fill="#8b8d91"/><circle cx="18" cy="18" r="13" fill="#33353a"/><circle cx="18" cy="18" r="9" fill="none" stroke="#c8c8c8" stroke-width="2"/><path d="M18 18V8M18 18 9 24M18 18l9 6" stroke="#c8c8c8" stroke-width="2"/><circle cx="18" cy="18" r="2.500" fill="#c8c8c8"/></svg><b class="badge">1</b></div>
    <i class="docksep"></i>
    <div class="app on"><svg viewBox="0 0 36 36"><path d="M9 2h18l9 11-18 22L0 13z" fill="#f7a71c"/><path d="M9 2h18l-9 33z" fill="#fbd07a"/><path d="M0 13h36L18 35z" fill="#f0851c"/><path d="M10 13h16l-8 22z" fill="#fcc04f"/></svg></div>
    <div class="app"><svg viewBox="0 0 36 36"><g transform="rotate(-7 18 18)"><rect x="6" y="2" width="25" height="32" fill="#80888b"/><text x="18.500" y="27" class="fontf">F</text></g></svg></div>
    <div class="app"><svg viewBox="0 0 36 36"><g transform="rotate(-5 16 16)"><rect x="2" y="4" width="30" height="24" fill="#f0f0f0"/><rect x="4" y="6" width="26" height="20" fill="#6aa8d8"/><path d="M4 22l8-8 7 7 4-3 7 6v2H4z" fill="#3f6f96"/></g><circle cx="27" cy="27" r="6" fill="#555" stroke="#ccc"/></svg></div>
    <i class="docksep"></i>
    <div class="app"><svg viewBox="0 0 36 36"><path d="M2 8h13l3 3h16v23H2z" fill="#3c86b8"/><path d="M2 12h32v22H2z" fill="#5ba7d8"/><path d="M6 2h24v6H6z" fill="#1c1c20"/></svg></div>
    <div class="app"><svg viewBox="0 0 36 36"><rect x="1" y="1" width="34" height="34" fill="#f2f2f2"/><path d="M1 1h34v5H1z" fill="#c9c9c9"/><path d="M5 10h7M5 14h7M5 18h7M5 22h7M16 10h14M16 14h14M16 18h14M16 22h8" stroke="#999"/><circle cx="28" cy="28" r="7" fill="url(#gBlue)" stroke="#eee"/></svg></div>
    <div class="app"><svg viewBox="0 0 36 36"><path d="M6 6h24l-2 28H8z" fill="#3a3a3d"/><ellipse cx="18" cy="6" rx="13" ry="4" fill="#222" stroke="#aaa"/><path d="M13 4l2-3 3 3 4-2 1 3z" fill="#c8c8c8"/><path d="M12 12l1 20M18 12v20M24 12l-1 20" stroke="#555"/></svg></div>
  </div>
</footer>
</body>
</html>
```
FILE: styles.css
```css
* { box-sizing: border-box; }
html, body { margin: 0; padding: 0; }
body {
  width: 1680px; height: 1050px; overflow: hidden;
  background: #0a0a10;
  font-family: "Open Sans", "Noto Sans", sans-serif;
  font-size: 10.5px; color: #c8c8c8;
  display: flex; flex-direction: column;
}
.defs { display: block; width: 0; height: 0; overflow: hidden; }
.spacer { flex: 1; }
i { display: block; font-style: normal; }
svg { display: block; flex: none; }
.chev { width: 9px; height: 6px; color: #cfcfcf; }

/* menu bar */
.menubar {
  height: 23px; flex: none; display: flex; align-items: center;
  background: linear-gradient(90deg, #0c0c14 0%, #18152c 6%, #371c4a 16%, #3a1d4c 24%, #2d1842 34%, #1c1028 44%, #21121f 50%, #1a0f20 58%, #13121f 70%, #0e0f1c 100%);
  color: #fff; font-family: Roboto, "Liberation Sans", sans-serif; font-size: 14px;
  padding-left: 20px;
}
.apple { width: 14px; height: 16px; fill: #fff; margin-right: 21px; }
.menus { display: flex; gap: 18px; font-size: 15px; }
.menus b { font-weight: 700; margin-right: 2px; }
.extras {
  margin-left: auto; display: grid; align-items: center; justify-items: start;
  grid-template-columns: 34px 30px 20px 30px 32px 26px 30px 32px 30px 38px 33px 71px 56px 32px 27px 42px;
}
.mi { height: 16px; width: auto; max-width: 22px; }
.mtxt { font-size: 14px; white-space: nowrap; }
.flag { width: 17px; height: 19px; display: flex; flex-direction: column; }
.flag i { height: 5px; background: #f2f2f2; }
.flag i + i { background: #d91f2e; }
.flag em { font: 700 8px/9px "Liberation Sans", sans-serif; color: #d91f2e; }

/* window */
.window {
  height: 979px; flex: none; display: flex; flex-direction: column;
  background: #404040; border-radius: 5px 5px 0 0; overflow: hidden;
}
.appbar {
  height: 35px; flex: none; display: flex; align-items: center;
  background: #424242; border-bottom: 1px solid #2d2d2d; padding-left: 10px;
}
.lights { display: flex; gap: 9px; margin-right: 17px; }
.lights i { width: 11px; height: 11px; border-radius: 50%; }
.red { background: #f05a4f; box-shadow: inset 0 0 0 3px #f05a4f, inset 0 0 0 8px #5a1010; }
.yel { background: #f4b02a; }
.grn { background: #2ec544; }
.ailogo { font: 400 21px/1 "Open Sans", sans-serif; color: #ae7048; width: 40px; }
.tile { width: 16px; height: 16px; font: 700 10px/16px "Open Sans", sans-serif; text-align: center; }
.br { background: #626262; color: #444; width: 18px; margin-right: 18px; }
.st { background: #bdbdbd; color: #333; width: 17px; margin-right: 14px; }
.wsicon { width: 18px; height: 14px; margin-right: 7px; }
.ws-ch { margin-right: 16px; }
.rocket { width: 22px; height: 18px; }
.workspace {
  display: flex; align-items: center; gap: 11px; height: 26px; width: 158px;
  border-left: 1px solid #383838; border-right: 1px solid #383838;
  padding-left: 14px; font-size: 12.5px; font-weight: 600; color: #d2d2d2; letter-spacing: .35px; white-space: nowrap;
}
.stock {
  width: 186px; height: 21px; margin: 0 6px; background: #3a3a3a; border: 1px solid #363636; border-radius: 3px;
  display: flex; align-items: center; gap: 6px; padding-left: 3px; color: #767676; font-size: 11.5px;
}
.sicon { width: 16px; height: 13px; }

/* control bar */
.ctrl {
  height: 34px; flex: none; display: flex; align-items: center;
  background: #404040; border-bottom: 1px solid #2d2d2d;
  padding-right: 18px;
}
.grip-v { width: 3px; height: 21px; margin: 0 8px 0 4px; background: repeating-linear-gradient(180deg, #7a7a7a 0 1px, transparent 1px 3px); flex: none; }
.nosel { width: 88px; height: 24px; line-height: 24px; border-right: 1px solid #373737; margin-right: 8px; color: #b8b8b8; flex: none; font-size: 10.2px; }
.swatchdd { display: flex; align-items: center; width: 37px; height: 21px; gap: 5px; margin-right: 7px; border: 1px solid #363636; border-left: 0; border-radius: 0 2px 2px 0; flex: none; }
.swatchdd + .swatchdd { width: 37px; margin-right: 13px; }
.sw { width: 19px; height: 19px; flex: none; }
.white { background: #fff; }
.lgrey { background: #dcdcdc; }
.ul { text-decoration: underline; color: #c4c4c4; flex: none; }
.stroke-l { width: 40px; }
.strokebox { width: 87px; height: 22px; margin-right: 5px; background: #3a3a3a; border: 1px solid #303030; display: flex; align-items: center; flex: none; }
.spin { width: 17px; height: 20px; border-right: 1px solid #303030; display: flex; flex-direction: column; justify-content: center; align-items: center; gap: 3px; background: #424242; }
.spin .chev { width: 7px; height: 5px; }
.up, .flip { transform: rotate(180deg); }
.blank { width: 51px; height: 20px; border-right: 1px solid #303030; margin-right: 5px; }
.greybox { width: 109px; height: 22px; margin-right: 6px; display: flex; align-items: center; flex: none; }
.greybox span { width: 90px; height: 22px; background: #6e6e6e; }
.greybox .chev { color: #5c5c5c; margin-left: 5px; }
.brushbox { width: 104px; height: 22px; margin-right: 8px; display: flex; align-items: center; border: 1px solid #363636; flex: none; }
.brushbox span { width: 86px; height: 20px; background: #e2e2e2; color: #111; line-height: 20px; font-size: 10.5px; display: flex; white-space: nowrap; }
.brushbox span i { width: 24px; text-align: center; font-size: 9px; }
.brushbox .chev { margin-left: 4px; }
.opac-l { width: 45px; }
.opacbox { width: 78px; height: 22px; margin-right: 5px; display: flex; align-items: center; border: 1px solid #303030; flex: none; }
.opacbox span { width: 59px; height: 20px; background: #383838; padding-left: 3px; line-height: 19px; color: #d8d8d8; }
.caret { width: 6px; height: 10px; margin-left: 6px; }
.style-l { width: 32px; color: #a8a8a8; flex: none; }
.style-d.swatchdd { width: 38px; margin-right: 12px; }
.btn {
  font-family: inherit; font-size: 10.5px; color: #d8d8d8; background: #404040;
  border: 1px solid #5a5a5a; border-radius: 3px; height: 21px; padding: 0; flex: none;
}
.b-doc { width: 100px; margin-right: 5px; }
.b-pref { width: 76px; margin-right: 10px; }
.isol { width: 17px; height: 18px; margin-right: 4px; }
.iso-ch { width: 8px; }
.grid4 { width: 12px; height: 12px; margin-right: 9px; }
.darkbox { width: 23px; height: 24px; background: #262626; border-radius: 2px; display: flex; align-items: center; justify-content: center; margin-right: 3px; }
.darkbox svg { width: 15px; height: 17px; }
.listic { width: 12px; height: 12px; margin-left: 18px; }

/* work area */
.work { flex: 1; min-height: 0; display: flex; }
.collapse { height: 11px; background: #383838; font-size: 10px; line-height: 9px; color: #9a9a9a; border-bottom: 1px solid #2d2d2d; padding-left: 6px; }
.toolbar { width: 73px; flex: none; background: #414141; border-right: 2px solid #2f2f2f; }
.grip { height: 9px; margin: 3px 26px 0; background: repeating-linear-gradient(90deg, #6e6e6e 0 1px, transparent 1px 2px); }
.tools { display: grid; grid-template-columns: 30px 30px; grid-auto-rows: 24px; padding: 2px 0 2px 6px; margin-right: 5px; border-bottom: 1px solid #525252; }
.t-first { padding-top: 6px; }
.t-tight { padding-top: 1px; }
.nosep { border-bottom: 0; padding-top: 1px; padding-bottom: 0; }
.t-last { padding-top: 6px; }
.tool { position: relative; display: flex; align-items: center; justify-content: center; width: 30px; height: 24px; border-radius: 3px; }
.tool.on { background: #262626; height: 23px; }
.tool svg { width: 22px; height: 22px; }
.tool.more::after { content: ""; position: absolute; right: 1px; bottom: 1px; border: 2px solid transparent; border-right-color: #d0d0d0; border-bottom-color: #d0d0d0; }
.ic { fill: none; stroke: #c4c4c4; stroke-width: 1.2; }
.fi { fill: #bdbdbd; }
.fi2 { fill: #c4c4c4; stroke: none; }
.ttool { font: 700 22px/24px "Liberation Serif", serif; color: #c4c4c4; }
.colors { padding: 4px 0 0 6px; }
.fillstroke { position: relative; height: 59px; }
.bigfill { position: absolute; left: 0; top: 0; width: 36px; height: 36px; background: #fff; border: 1px solid #222; z-index: 1; }
.bigstroke { position: absolute; left: 18px; top: 18px; width: 36px; height: 36px; border: 1px solid #222; }
.swap { position: absolute; left: 44px; top: 2px; width: 13px; height: 13px; }
.deflt { position: absolute; left: 0; top: 38px; width: 13px; height: 13px; }
.seg { width: 58px; height: 22px; margin-top: 1px; display: flex; border: 1px solid #4c4c4c; border-radius: 3px; }
.seg + .seg { margin-top: 2px; }
.seg span { flex: 1; display: flex; align-items: center; justify-content: center; }
.seg .on { background: #2a2a2a; }
.cm { width: 13px; height: 13px; border: 1px solid #000; }
.grad { background: linear-gradient(135deg, #000b38, #107b52); }
.dm { width: 14px; height: 14px; }
.screen { width: 23px; height: 16px; margin: 6px 0 0 19px; }

/* document */
.doc { width: 1314px; flex: none; display: flex; flex-direction: column; background: #3c3c3c; }
.tabs { height: 28px; flex: none; display: flex; background: #383838; }
.tab { height: 28px; width: 360px; display: flex; align-items: center; color: #9a9a9a; border-right: 1px solid #333; font-size: 11px; white-space: nowrap; padding: 0 0 2px 6px; letter-spacing: .19px; }
.tab.active { width: 278px; background: #424242; color: #e4e4e4; letter-spacing: 0; }
.x { width: 13px; margin-right: 6px; font-size: 13px; text-align: center; }
.hruler { height: 17px; flex: none; display: flex; background: #282828; }
.corner { width: 17px; flex: none; border-right: 1px solid #555; }
.hticks {
  width: 1281px; display: flex; overflow: hidden; color: #a8a8a8;
  font: 10px/14px "Liberation Sans", sans-serif;
  background: repeating-linear-gradient(90deg, #5e5e5e 0 1px, transparent 1px 13.34px) 4.5px 100% / 100% 4px no-repeat;
}
.hticks span { width: 66.7px; flex: none; border-left: 1px solid #6a6a6a; padding-left: 3px; }
.hticks .lead { width: 44.5px; border-left: 0; }
.vs-up { width: 16px; display: flex; align-items: center; justify-content: center; background: #3c3c3c; }
.mid { flex: 1; min-height: 0; display: flex; }
.vruler {
  width: 17px; flex: none; background: repeating-linear-gradient(180deg, #5e5e5e 0 1px, transparent 1px 13.36px) 100% 3.6px / 5px 100% no-repeat #282828;
  color: #a8a8a8; font: 10px/9px "Liberation Sans", sans-serif; overflow: hidden;
}
.vruler span { display: flex; align-items: flex-end; height: 66.8px; border-bottom: 1px solid #6a6a6a; padding: 0 8px 3px 3px; word-break: break-all; }
.vruler .first { height: 30.5px; }
.canvas { position: relative; width: 1281px; background: #4e4e4e; overflow: hidden; }
.vscroll { flex: 1; position: relative; background: #3a3a3a; border-left: 1px solid #343434; }
.vthumb { position: absolute; left: 1px; top: 435px; width: 14px; height: 25px; border-radius: 7px; background: #565656; }
.vs-down { position: absolute; left: 4px; bottom: 4px; width: 8px; }

/* artboards on the canvas */
.ab { position: absolute; background: linear-gradient(135deg, #000b38 0%, #02273c 30%, #06383f 52%, #0a5348 75%, #107b52 100%); }
.ab1 { left: 0; top: 30px; width: 618px; height: 360px; }
.selected { box-shadow: inset 0 0 0 1px #000; }
.ab2 { left: 636px; top: 31px; width: 641px; height: 359px; }
.ab3 { left: 0; top: 416px; width: 618px; height: 360px; }
.ab4 { left: 636px; top: 416px; width: 641px; height: 360px; }
.pill {
  position: absolute; width: 110px; height: 110px; display: flex; align-items: center; justify-content: center; padding-bottom: 3px;
  background: linear-gradient(135deg, #117f58 12%, #03243c 58%, #000b38 88%);
  color: #fff; font: 300 29px/1 Lato, "Open Sans", sans-serif; white-space: nowrap; -webkit-text-stroke: .25px #fff;
}
.circle { border-radius: 50%; }
.round { border-radius: 21px; }
.c1 { left: 243px; top: 126px; }
.r1 { left: 156px; top: 125px; }
.r2 { left: 375px; top: 125px; }
.c4 { left: 156px; top: 117px; }
.r4 { left: 328px; top: 117px; }
.nudge { margin-right: 6px; }
.bigsq { position: absolute; left: 320px; top: 25px; width: 269px; height: 306px; background: linear-gradient(135deg, #117f58 0%, #04283f 58%, #000b38 100%); }

/* status bar */
.statusbar { height: 17px; flex: none; display: flex; align-items: center; background: #3a3a3a; }
.fld { background: #343434; display: flex; align-items: center; color: #d4d4d4; }
.zoomf { width: 52px; height: 17px; margin-left: 5px; padding-left: 3px; }
.pagef { width: 40px; height: 17px; padding-left: 5px; }
.ddbox { width: 16px; height: 17px; display: flex; align-items: center; justify-content: center; background: #3f3f3f; }
.ddbox .chev { width: 8px; }
.navs { width: 43px; display: flex; gap: 12px; padding-left: 9px; height: 17px; align-items: center; }
.navs i { position: relative; width: 0; height: 0; border: 4px solid transparent; }
.first-i, .prev-i { border-right: 6px solid #666 !important; border-left: 0 !important; }
.next-i, .last-i { border-left: 6px solid #666 !important; border-right: 0 !important; }
.first-i::before, .last-i::before { content: ""; position: absolute; top: -4px; width: 2px; height: 8px; background: #666; }
.first-i::before { left: -3px; }
.last-i::before { left: 1px; }
.toggle { width: 153px; text-align: center; color: #a8a8a8; margin-left: 24px; white-space: nowrap; }
.playbox { width: 0; height: 0; margin-left: 30px; border-left: 5px solid #c4c4c4; border-top: 5px solid transparent; border-bottom: 5px solid transparent; }
.lt, .rt { width: 10px; text-align: center; color: #888; font-size: 13px; line-height: 15px; }
.lt { margin-left: 8px; }
.htrack { width: 840px; height: 17px; position: relative; }
.hthumb { position: absolute; left: 458px; top: 1px; width: 26px; height: 15px; border-radius: 8px; background: #4a4a4a; }

/* icon column */
.iconcol { width: 42px; flex: none; background: #404040; border-right: 3px solid #2f2f2f; }
.col-top { background: #383838; padding-left: 0; margin-right: -3px; position: relative; z-index: 1; text-align: center; }
.dockgroup { display: flex; flex-direction: column; align-items: center; border-bottom: 1px solid #2a2a2a; padding-top: 5px; margin-left: 2px; border-left: 1px solid #2d2d2d; }
.gripdots { width: 20px; height: 4px; flex: none; background: repeating-linear-gradient(90deg, #7a7a7a 0 1px, transparent 1px 2px); }
.pi { width: 18px; height: 18px; margin-bottom: 9px; }
.dockgroup .gripdots + .pi { margin-top: 7px; }
.g1 { height: 69px; }
.g2 { height: 97px; }
.g3 { height: 97px; }
.g4 { height: 69px; }
.g5 { height: 97px; }
.dockgroup.g1 .gripdots + .pi, .dockgroup.g5 .gripdots + .pi { margin-top: 6px; }
.g1 .pi + .pi { margin-top: 2px; }
.g2 .pi, .g3 .pi { margin-bottom: 10px; }
.g5 .pi { margin-bottom: 10px; }

/* properties panel */
.panel { flex: 1; background: #434343; display: flex; flex-direction: column; }
.panel .collapse { text-align: right; padding-right: 6px; margin-left: -3px; }
.ptabs { height: 28px; flex: none; display: flex; background: #383838; border-bottom: 1px solid #303030; }
.ptab { width: 61px; display: flex; align-items: center; justify-content: center; color: #a4a4a4; font-weight: 600; border-right: 1px solid #303030; font-size: 10.5px; }
.ptab.active { width: 70px; background: #434343; color: #e6e6e6; height: 28px; }
.sec { border-bottom: 2px solid #3b3b3b; padding-left: 10px; }
.plabel { color: #b8b8b8; }
.s-nosel { height: 33px; padding-top: 10px; }
.s-doc { height: 127px; padding-top: 9px; }
.title { height: 17px; line-height: 17px; }
.frow { display: flex; align-items: center; margin-top: 8px; height: 21px; margin-left: -10px; }
.title + .frow { margin-top: 7px; }
.frow label { width: 89px; text-align: right; margin-right: 6px; color: #bcbcbc; }
.unitsf { width: 83px; height: 20px; justify-content: space-between; padding: 0 5px 0 6px; background: #383838; border: 1px solid #3f3f3f; border-radius: 2px; }
.abf { width: 83px; height: 20px; padding-left: 4px; background: #343434; border-radius: 2px; justify-content: space-between; }
.abdd { width: 18px; height: 20px; background: #3a3a3a; border-left: 1px solid #4a4a4a; display: flex; align-items: center; justify-content: center; }
.tri-l, .tri-r { width: 0; height: 0; border: 4px solid transparent; }
.tri-l { border-right: 6px solid #5e5e5e; border-left: 0; margin-left: 12px; }
.tri-r { border-left: 6px solid #5e5e5e; border-right: 0; margin-left: 15px; }
.editab { width: 90px; height: 21px; }
.s-row { height: 40px; display: flex; align-items: center; gap: 8px; }
.rowlabel { width: 78px; color: #b8b8b8; }
.sq { width: 22px; height: 22px; display: flex; align-items: center; justify-content: center; border-radius: 2px; }
.sq.on { background: #262626; }
.sq svg { width: 16px; height: 16px; }
.s-pref { height: 136px; padding-top: 7px; }
.krow { display: flex; align-items: center; gap: 5px; height: 20px; margin-top: 6px; color: #b8b8b8; font-size: 10.2px; }
.kf { width: 59px; height: 20px; padding-left: 6px; background: #383838; color: #e0e0e0; font-size: 10.5px; }
.chk { display: flex; align-items: center; gap: 6px; height: 24px; color: #d4d4d4; font-size: 10.3px; }
.krow + .chk { margin-top: 3px; }
.chk i { width: 12px; height: 12px; border: 1px solid #6a6a6a; border-radius: 1px; background: #3e3e3e; }
.s-quick { border: 0; padding-top: 14px; }
.qrow { display: flex; gap: 10px; margin-top: 7px; }
.qb { width: 100px; height: 20px; }

/* dock */
.dockrow {
  height: 48px; flex: none; padding-left: 79px;
  background: linear-gradient(90deg, #08080e 0 1590px, #4a2b72 1610px, #553184 1680px);
}
.dock {
  width: 1521px; height: 48px; display: flex; padding-left: 1.5px;
  border-radius: 5px 5px 0 0; border-top: 1px solid #3a2f48;
  background: linear-gradient(90deg, #1a0e22 0%, #2c1a35 10%, #7e5078 12.5%, #a8698f 16.5%, #a06488 24%, #6a3c66 29%, #261433 34%, #1e1030 41%, #3a2038 45%, #8a5060 51%, #a06a6c 56%, #7a3a70 63%, #5a2d70 68%, #46256c 77%, #331a5c 100%);
}
.app { position: relative; width: 39px; flex: none; height: 47px; display: flex; justify-content: center; padding-top: 5px; }
.app > svg { width: 33px; height: 33px; }
.app.on::after { content: ""; position: absolute; left: 18px; bottom: 1px; width: 3px; height: 3px; border-radius: 50%; background: #e8d0e8; }
.docksep { width: 18px; flex: none; height: 34px; margin-top: 8px; background: linear-gradient(90deg, transparent 8px, #6a5a78 8px, #6a5a78 9px, transparent 9px); }
.adobe { width: 33px; height: 33px; font: 600 20px/29px "Open Sans", sans-serif; text-align: center; border: 2px solid; border-radius: 2px; background: #2a1006; }
.ai { color: #f58a12; border-color: #e8760a; }
.xd { color: #f3b5e2; border-color: #e6009a; background: #2d0126; border-radius: 6px; }
.live { width: 31px; height: 32px; margin-top: 1px; background: #353242; color: #eee; font: 600 13px/32px "Open Sans", sans-serif; text-align: center; }
.jb { font: 800 10px "Liberation Sans", sans-serif; fill: #fff; text-anchor: middle; }
.calm { font: 700 6px "Liberation Sans", sans-serif; fill: #fff; text-anchor: middle; }
.cald { font: 400 17px "Liberation Sans", sans-serif; fill: #222; text-anchor: middle; }
.fontf { font: 700 24px "Liberation Serif", serif; fill: #2e3336; text-anchor: middle; }
.badge {
  position: absolute; right: 0; top: 2px; min-width: 14px; height: 14px; border-radius: 7px; padding: 0 3px;
  background: #ee2f33; color: #fff; font: 400 10px/14px Roboto, sans-serif; text-align: center;
}
```
